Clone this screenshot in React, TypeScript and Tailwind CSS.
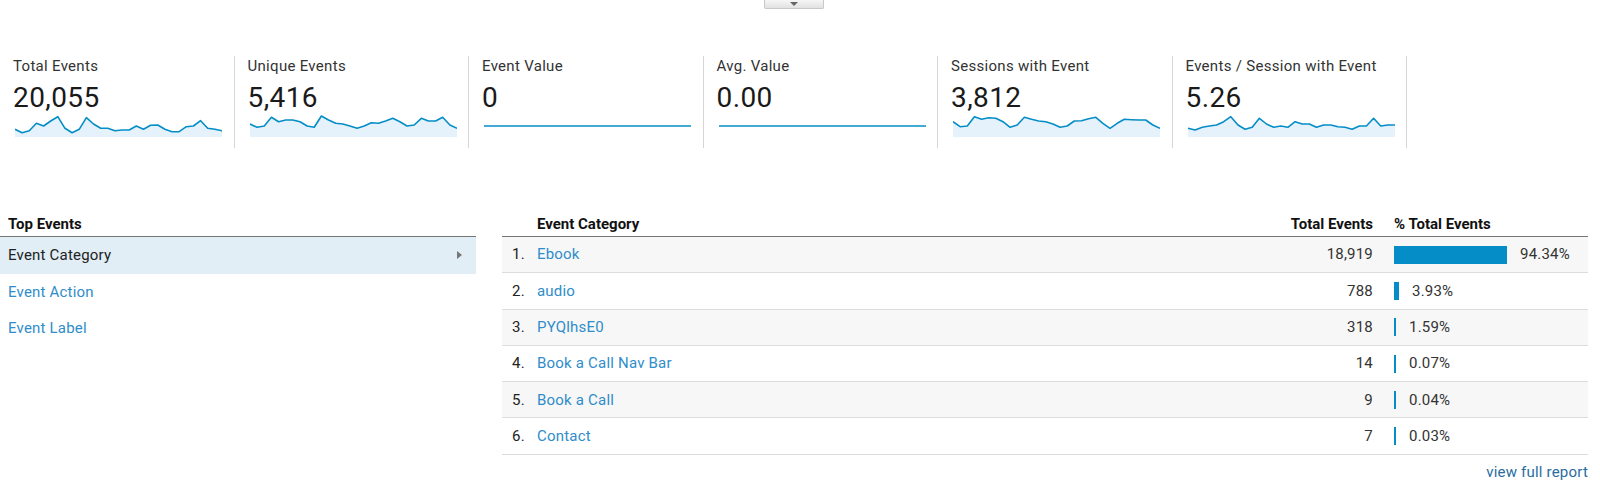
import React from 'react';

interface Metric {
    label: string;
    value: string;
    points: number[] | null;
}

const METRICS: Metric[] = [
    {
        label: 'Total Events',
        value: '20,055',
        points: [15.3, 18.7, 16.7, 9.3, 12, 7, 2.7, 14.3, 18.7, 15.3, 3.7, 10, 14.3, 14.3, 16.7, 16, 16, 12, 15.3, 11.3, 11, 15.3, 17.7, 17.7, 12.7, 12, 6.7, 14.3, 15.3, 16.7],
    },
    {
        label: 'Unique Events',
        value: '5,416',
        points: [10, 13.3, 12, 3.3, 7.7, 6, 6, 7.7, 12, 13.3, 2, 6, 9.3, 10, 12, 14.3, 12, 8.7, 9.3, 7, 4.3, 7.7, 12, 11, 4.3, 7, 7, 3.3, 11, 14.3],
    },
    { label: 'Event Value', value: '0', points: null },
    { label: 'Avg. Value', value: '0.00', points: null },
    {
        label: 'Sessions with Event',
        value: '3,812',
        points: [7.7, 12.7, 12, 2.7, 5.3, 3.7, 4.3, 7.7, 13.3, 11, 3.3, 5.3, 7, 7.7, 10, 13.3, 12, 7, 6.7, 4.7, 3.3, 9.3, 14.3, 9.3, 5.3, 5.7, 6, 6, 11, 14.3],
    },
    {
        label: 'Events / Session with Event',
        value: '5.26',
        points: [14.3, 16, 13.3, 12, 11, 7.7, 2.7, 11, 15.3, 13.3, 4.3, 10, 13.3, 12, 13.3, 7.7, 10, 10, 13.3, 11, 11, 12.7, 13.3, 15.3, 12, 12, 4.3, 12, 11, 11],
    },
];

const ROWS = [
    { name: 'Ebook', total: '18,919', pct: 94.34 },
    { name: 'audio', total: '788', pct: 3.93 },
    { name: 'PYQlhsE0', total: '318', pct: 1.59 },
    { name: 'Book a Call Nav Bar', total: '14', pct: 0.07 },
    { name: 'Book a Call', total: '9', pct: 0.04 },
    { name: 'Contact', total: '7', pct: 0.03 },
];

const W = 207;
const H = 23;

function Sparkline({ points }: { points: number[] | null }) {
    if (!points) {
        return (
            <svg width={W} height={H} viewBox={`0 0 ${W} ${H}`} className="block">
                <line x1="0" y1="12" x2={W} y2="12" stroke="#058dc7" strokeWidth="1.6" />
            </svg>
        );
    }
    const step = W / (points.length - 1);
    const line = points.map((y, i) => `${(i * step).toFixed(1)},${y}`).join(' ');
    const area = `0,${H} ${line} ${W},${H}`;
    return (
        <svg width={W} height={H} viewBox={`0 0 ${W} ${H}`} className="block">
            <polygon points={area} fill="#e6f2fb" />
            <polyline points={line} fill="none" stroke="#058dc7" strokeWidth="1.6" strokeLinejoin="round" />
        </svg>
    );
}

export default function App() {
    return (
        <div className="w-[1600px] h-[489px] bg-white text-[#333] font-['Roboto','Liberation_Sans',sans-serif] overflow-hidden">
            {/* collapse toggle */}
            <div className="ml-[764px] w-[60px] h-[9px] border border-t-0 border-[#c8c8c8] rounded-b-[2px] bg-gradient-to-b from-[#f6f6f6] to-[#e2e2e2] flex items-center justify-center">
                <div className="w-0 h-0 border-l-[4px] border-r-[4px] border-t-[4px] border-l-transparent border-r-transparent border-t-[#666]" />
            </div>

            {/* Metrics */}
            <div className="mt-[47px] flex">
                {METRICS.map((m) => (
                    <div key={m.label} className="w-[234.5px] h-[92px] border-r border-[#d6d6d6] pl-[13px] pt-[1.5px]">
                        <div className="text-[15px] leading-[16px] tracking-[0.3px] text-[#333]">{m.label}</div>
                        <div className="mt-[8.5px] text-[28px] leading-[32px] tracking-[0.4px] text-[#1a1a1a]">{m.value}</div>
                        <div className="ml-[2px]">
                            <Sparkline points={m.points} />
                        </div>
                    </div>
                ))}
            </div>

            {/* Top events */}
            <div className="mt-[54px] flex">
                <div className="w-[476px]">
                    <div className="h-[35px] pb-[4px] flex items-end pl-[8px] text-[15px] leading-[16px] font-bold text-[#111] border-b border-[#757575]">
                        Top Events
                    </div>
                    <div className="h-[36.5px] bg-[#e1eef6] flex items-center justify-between pl-[8px] pr-[14px] text-[15px] tracking-[0.2px] text-[#222]">
                        <span>Event Category</span>
                        <div className="w-0 h-0 border-t-[4px] border-b-[4px] border-l-[5px] border-t-transparent border-b-transparent border-l-[#777]" />
                    </div>
                    <div className="h-[36.5px] flex items-center pl-[8px] text-[15px] tracking-[0.2px] text-[#2f8dca]">Event Action</div>
                    <div className="h-[36.5px] flex items-center pl-[8px] text-[15px] tracking-[0.2px] text-[#2f8dca]">Event Label</div>
                </div>

                <div className="ml-[26px] w-[1086px]">
                    <div className="h-[35px] pb-[4px] flex items-end text-[15px] leading-[16px] font-bold text-[#111] border-b border-[#757575]">
                        <div className="w-[35px]" />
                        <div className="flex-1">Event Category</div>
                        <div className="w-[140px] pr-[21px] text-right">Total Events</div>
                        <div className="w-[194px]">% Total Events</div>
                    </div>
                    {ROWS.map((r, i) => (
                        <div
                            key={r.name}
                            className={`h-[36.3px] flex items-center text-[15px] tracking-[0.2px] border-b border-[#dcdcdc] ${i % 2 === 0 ? 'bg-[#f7f7f7]' : 'bg-white'}`}
                        >
                            <div className="w-[35px] pl-[10px] text-[#222]">{i + 1}.</div>
                            <div className="flex-1 text-[#2f8dca]">{r.name}</div>
                            <div className="w-[140px] pr-[21px] text-right text-[#333]">{r.total}</div>
                            <div className="w-[194px] flex items-center">
                                <div className="h-[18px] bg-[#058dc7]" style={{ width: Math.max(2, Math.round(r.pct * 1.2)) }} />
                                <span className="ml-[13px] text-[#333]">{r.pct.toFixed(2)}%</span>
                            </div>
                        </div>
                    ))}
                    <div className="mt-[9px] text-right text-[15px] leading-[16px] tracking-[0.2px] text-[#2b6c9e]">view full report</div>
                </div>
            </div>
        </div>
    );
}
